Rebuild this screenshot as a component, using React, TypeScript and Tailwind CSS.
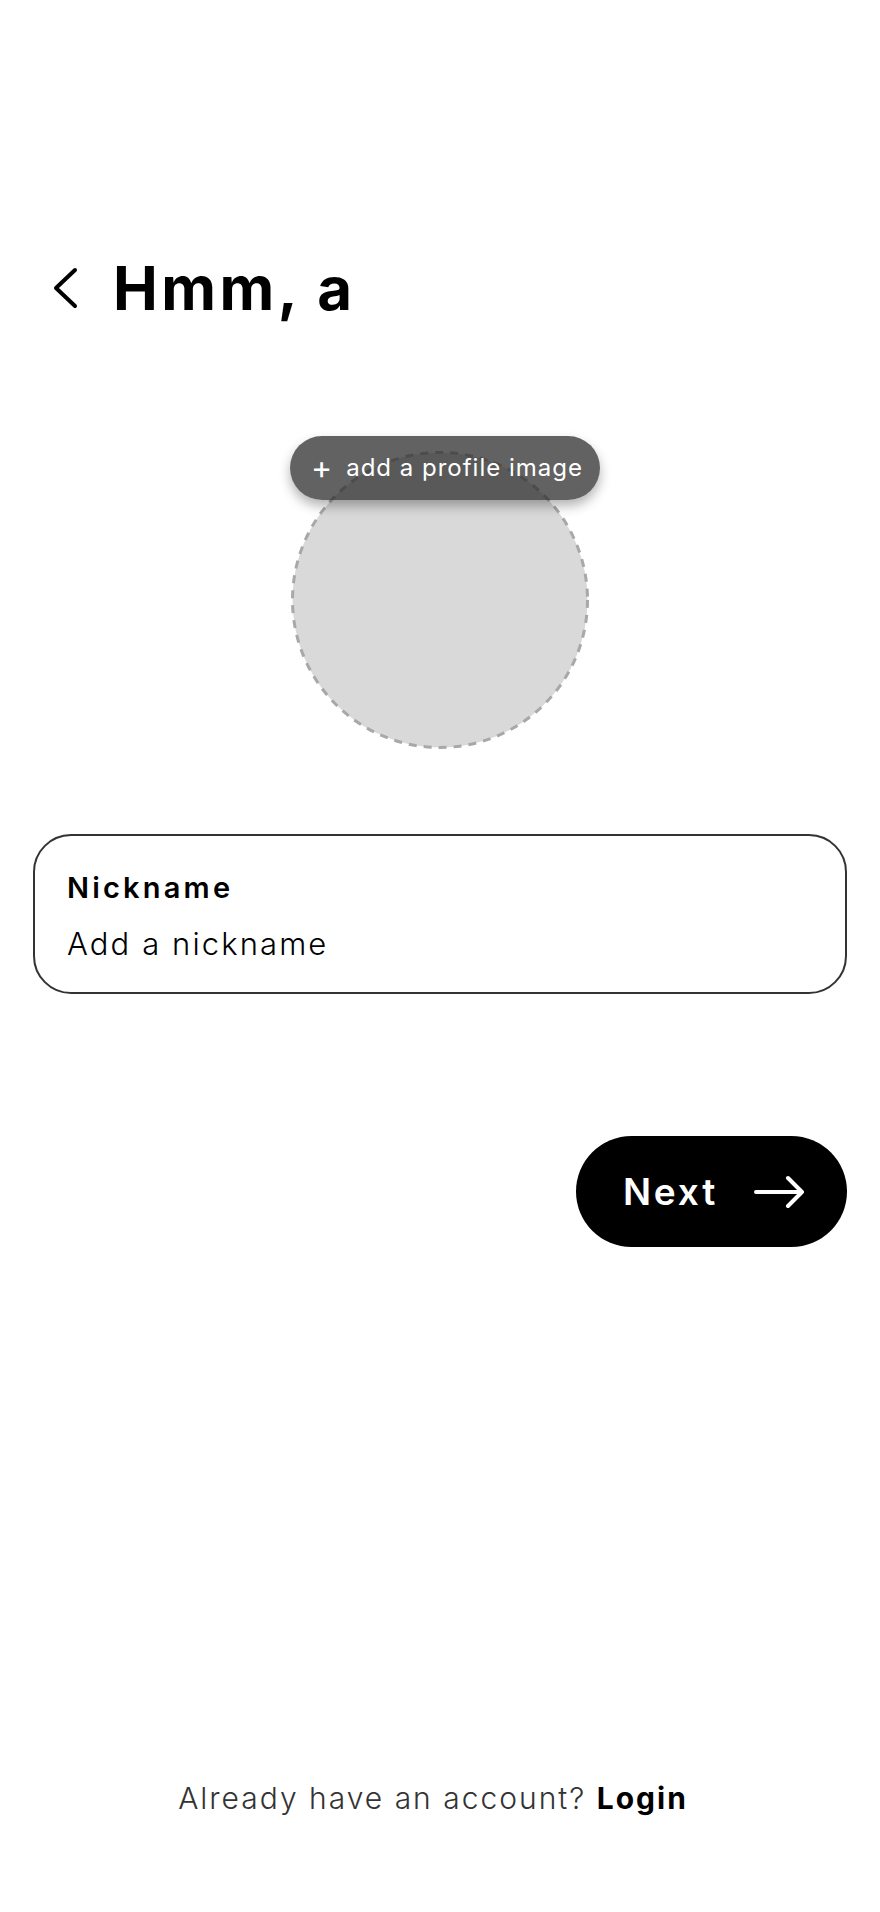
import { useState } from 'react'

const font = { fontFamily: 'Inter, "Noto Sans", sans-serif' }

function ChevronLeft() {
  return (
    <svg width="28" height="42" viewBox="0 0 28 42" fill="none">
      <path d="M24 3 L5 21 L24 39" stroke="#000" strokeWidth="4" strokeLinecap="round" strokeLinejoin="round" />
    </svg>
  )
}

function ArrowRight() {
  return (
    <svg width="52" height="34" viewBox="0 0 52 34" fill="none">
      <path d="M2 17 H48 M34 3 L48 17 L34 31" stroke="#fff" strokeWidth="4" strokeLinecap="round" strokeLinejoin="round" />
    </svg>
  )
}

// dashed placeholder ring for the avatar
function AvatarPlaceholder() {
  return (
    <svg width="298" height="298" viewBox="0 0 298 298" className="block">
      <circle cx="149" cy="149" r="147.5" fill="#d9d9d9" stroke="#a8a8a8" strokeWidth="3" strokeDasharray="8 7" />
    </svg>
  )
}

export default function App() {
  const [nickname, setNickname] = useState('')

  return (
    <div className="min-h-screen bg-white flex flex-col px-[33px]" style={font}>
      {/* Header */}
      <div className="flex items-center pt-[256px] pl-[18px]">
        <button className="w-[28px] h-[42px] flex items-center justify-center">
          <ChevronLeft />
        </button>
        <h1 className="ml-[34px] text-[60px] leading-[64px] font-bold text-black tracking-[3.5px]">Hmm, a</h1>
      </div>

      {/* Profile image */}
      <div className="flex justify-center mt-[131px]">
        <div className="relative">
          <AvatarPlaceholder />
          <button className="absolute top-[-15px] left-1/2 -translate-x-1/2 ml-[5px] h-[64px] w-[310px] rounded-full bg-[#2e2e2e]/75 shadow-[0_6px_12px_rgba(0,0,0,0.3)] flex items-center justify-center gap-[14px] pl-[4px] text-white">
            <span className="text-[32px] leading-none font-normal">+</span>
            <span className="text-[24px] font-normal tracking-[1px]">add a profile image</span>
          </button>
        </div>
      </div>

      {/* Nickname */}
      <label className="mt-[85px] block rounded-[38px] border-2 border-[#333] px-[32px] pt-[34px] pb-[28px]">
        <div className="text-[29px] leading-[36px] font-semibold text-black tracking-[3.2px]">Nickname</div>
        <input
          value={nickname}
          onChange={(e) => setNickname(e.target.value)}
          placeholder="Add a nickname"
          className="mt-[18px] w-full bg-transparent outline-none text-[31px] leading-[40px] font-light text-black placeholder:text-black tracking-[2.1px]"
        />
      </label>

      {/* Next */}
      <div className="flex justify-end mt-[142px]">
        <button className="w-[271px] h-[111px] rounded-full bg-black text-white flex items-center justify-center gap-[36px] pl-[6px]">
          <span className="text-[37px] font-semibold tracking-[2.8px]">Next</span>
          <ArrowRight />
        </button>
      </div>

      {/* Footer */}
      <div className="mt-auto pb-[94px] pr-[14px] text-center text-[30px] leading-[40px] tracking-[2px]">
        <span className="font-light text-[#333]">Already have an account? </span>
        <a className="font-bold text-black">Login</a>
      </div>
    </div>
  )
}
